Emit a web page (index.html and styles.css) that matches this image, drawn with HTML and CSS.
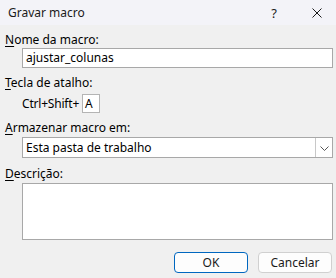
FILE: index.html
```html
<!DOCTYPE html>
<html lang="pt">
<head>
    <meta charset="UTF-8">
    <title>Gravar macro</title>
    <link rel="stylesheet" href="styles.css">
</head>
<body>

<div class="dialog">
    <!-- Title bar -->
    <div class="titlebar">
        <span class="title">Gravar macro</span>
        <span class="help">?</span>
        <svg class="close" width="10" height="10" viewBox="0 0 10 10">
            <path d="M0.5 0.5 L9.5 9.5 M9.5 0.5 L0.5 9.5" stroke="#1a1a1a" stroke-width="1"/>
        </svg>
    </div>

    <div class="content">
        <div class="label label-first"><u>N</u>ome da macro:</div>
        <div class="field text-field">ajustar_colunas</div>

        <div class="label label-next"><u>T</u>ecla de atalho:</div>
        <div class="shortcut">
            <span class="keys">Ctrl+Shift+</span>
            <span class="key-box">A</span>
        </div>

        <div class="label label-next"><u>A</u>rmazenar macro em:</div>
        <div class="field select-field">
            <span class="select-text">Esta pasta de trabalho</span>
            <span class="select-btn">
                <svg width="9" height="5" viewBox="0 0 9 5">
                    <path d="M0.5 0.5 L4.5 4.5 L8.5 0.5" fill="none" stroke="#555" stroke-width="1"/>
                </svg>
            </span>
        </div>

        <div class="label label-desc"><u>D</u>escrição:</div>
        <div class="field area-field"></div>

        <div class="buttons">
            <button class="btn btn-primary">OK</button>
            <button class="btn">Cancelar</button>
        </div>
    </div>
</div>

</body>
</html>
```

FILE: styles.css
```css
html, body {
    margin: 0;
    padding: 0;
}
body {
    width: 336px;
    height: 278px;
    background: #f0f0f0;
    font-family: "Noto Sans", "Open Sans", sans-serif;
    font-size: 12px;
    color: #000;
    overflow: hidden;
}
.titlebar {
    height: 25px;
    background: #f3f3f8;
    display: flex;
    align-items: center;
    padding-left: 8px;
    color: #1a1a1a;
}
.title {
    flex: 1;
    line-height: 16px;
    margin-top: 1px;
}
.help {
    font-size: 13px;
    margin-right: 35px;
    margin-top: 1px;
}
.close {
    margin-right: 14px;
    margin-top: 1px;
}
.content {
    padding: 0 3px 0 5px;
}
.label {
    line-height: 16px;
}
.label u {
    text-decoration-thickness: 1px;
    text-underline-offset: 2px;
}
.label-first {
    margin-top: 7px;
}
.label-next {
    margin-top: 7px;
}
.label-desc {
    margin-top: 8px;
}
.field {
    margin-left: 17px;
    background: #fff;
    border: 1px solid #a8a8a8;
    box-sizing: border-box;
}
.text-field {
    height: 20px;
    line-height: 18px;
    padding-left: 3px;
}
.shortcut {
    display: flex;
    align-items: center;
    margin: 3px 0 0 17px;
    height: 19px;
}
.keys {
    letter-spacing: -0.2px;
}
.key-box {
    box-sizing: border-box;
    width: 18px;
    height: 19px;
    margin-left: 3px;
    background: #fff;
    border: 1px solid #b4b4b4;
    line-height: 17px;
    padding-left: 2px;
}
.select-field {
    display: flex;
    height: 21px;
    margin-top: 1px;
}
.select-text {
    flex: 1;
    line-height: 19px;
    padding-left: 3px;
}
.select-btn {
    width: 16px;
    border-left: 1px solid #c8c8c8;
    display: flex;
    align-items: center;
    justify-content: center;
    padding-top: 1px;
}
.area-field {
    height: 57px;
    margin-top: 1px;
}
.buttons {
    display: flex;
    justify-content: flex-end;
    gap: 10px;
    margin-top: 12px;
    padding-right: 1px;
}
.btn {
    box-sizing: border-box;
    width: 74px;
    height: 21px;
    font-family: inherit;
    font-size: 12px;
    background: #fdfdfd;
    border: 1px solid #d0d0d0;
    border-radius: 4px;
    color: #1a1a1a;
    padding: 0;
}
.btn-primary {
    border-color: #0067c0;
}
```
